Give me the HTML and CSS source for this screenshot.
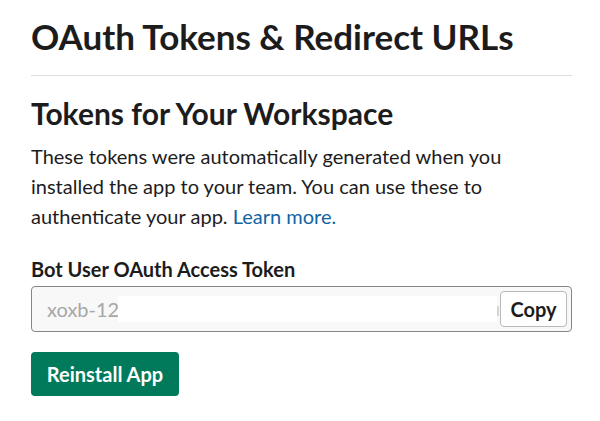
FILE: index.html
```html
<!DOCTYPE html>
<html>
<head>
<meta charset="utf-8">
<link rel="stylesheet" href="styles.css">
</head>
<body>
<main class="page">
  <h1 class="title">OAuth Tokens &amp; Redirect URLs</h1>
  <hr class="divider">
  <h2 class="section-title">Tokens for Your Workspace</h2>
  <p class="desc">These tokens were automatically generated when you installed the app to your team. You can use these to authenticate your app. <a class="link" href="#">Learn more.</a></p>
  <div class="field">
    <label class="field-label">Bot User OAuth Access Token</label>
    <div class="token-box">
      <span class="token-text">xoxb-12</span>
      <span class="redact"></span>
      <span class="token-tail"></span>
      <button class="copy-btn">Copy</button>
    </div>
  </div>
  <button class="primary-btn">Reinstall App</button>
</main>
</body>
</html>
```

FILE: styles.css
```css
* { box-sizing: border-box; }
html, body { margin: 0; padding: 0; background: #fff; }
body {
  font-family: Lato, "Open Sans", sans-serif;
  color: #1d1c1d;
  width: 600px;
  height: 421px;
  overflow: hidden;
}
.page {
  padding: 15px 28px 0 31px;
  width: 600px;
}
.title {
  margin: 0;
  font-size: 35px;
  line-height: 42px;
  font-weight: 700;
}
.divider {
  margin: 18px 0 0 0;
  border: 0;
  border-top: 1px solid #dddddd;
  height: 0;
}
.section-title {
  margin: 19px 0 0 0;
  font-size: 30px;
  line-height: 36px;
  font-weight: 700;
}
.desc {
  margin: 10px 0 0 0;
  font-size: 20px;
  line-height: 30px;
  width: 520px;
}
.link {
  color: #1264a3;
  text-decoration: none;
}
.field {
  margin-top: 26px;
}
.field-label {
  display: block;
  font-size: 20px;
  line-height: 24px;
  font-weight: 700;
}
.token-box {
  margin-top: 5px;
  width: 541px;
  height: 46px;
  border: 1px solid #868686;
  border-radius: 4px;
  background: #f8f8f8;
  display: flex;
  align-items: center;
  padding: 0 4px 0 15px;
}
.token-text {
  font-size: 20px;
  color: #a7a7a7;
  width: 71px;
  flex: none;
  white-space: nowrap;
}
.redact {
  width: 379px;
  height: 26px;
  background: #fff;
  flex: none;
}
.token-tail {
  width: 2px;
  height: 10px;
  margin: 4px 1px 0 0;
  background: #d4d4d4;
  flex: none;
}
.copy-btn {
  margin-left: auto;
  height: 36px;
  width: 67px;
  border: 1px solid #b9b9b9;
  border-radius: 4px;
  background: #fff;
  font-family: Lato, sans-serif;
  font-weight: 700;
  font-size: 20px;
  color: #1d1c1d;
  padding: 0;
}
.primary-btn {
  display: block;
  margin-top: 20px;
  height: 44px;
  width: 148px;
  border: 0;
  border-radius: 4px;
  background: #007a5a;
  color: #fff;
  font-family: Lato, sans-serif;
  font-weight: 700;
  font-size: 20px;
  padding: 0;
}
```
